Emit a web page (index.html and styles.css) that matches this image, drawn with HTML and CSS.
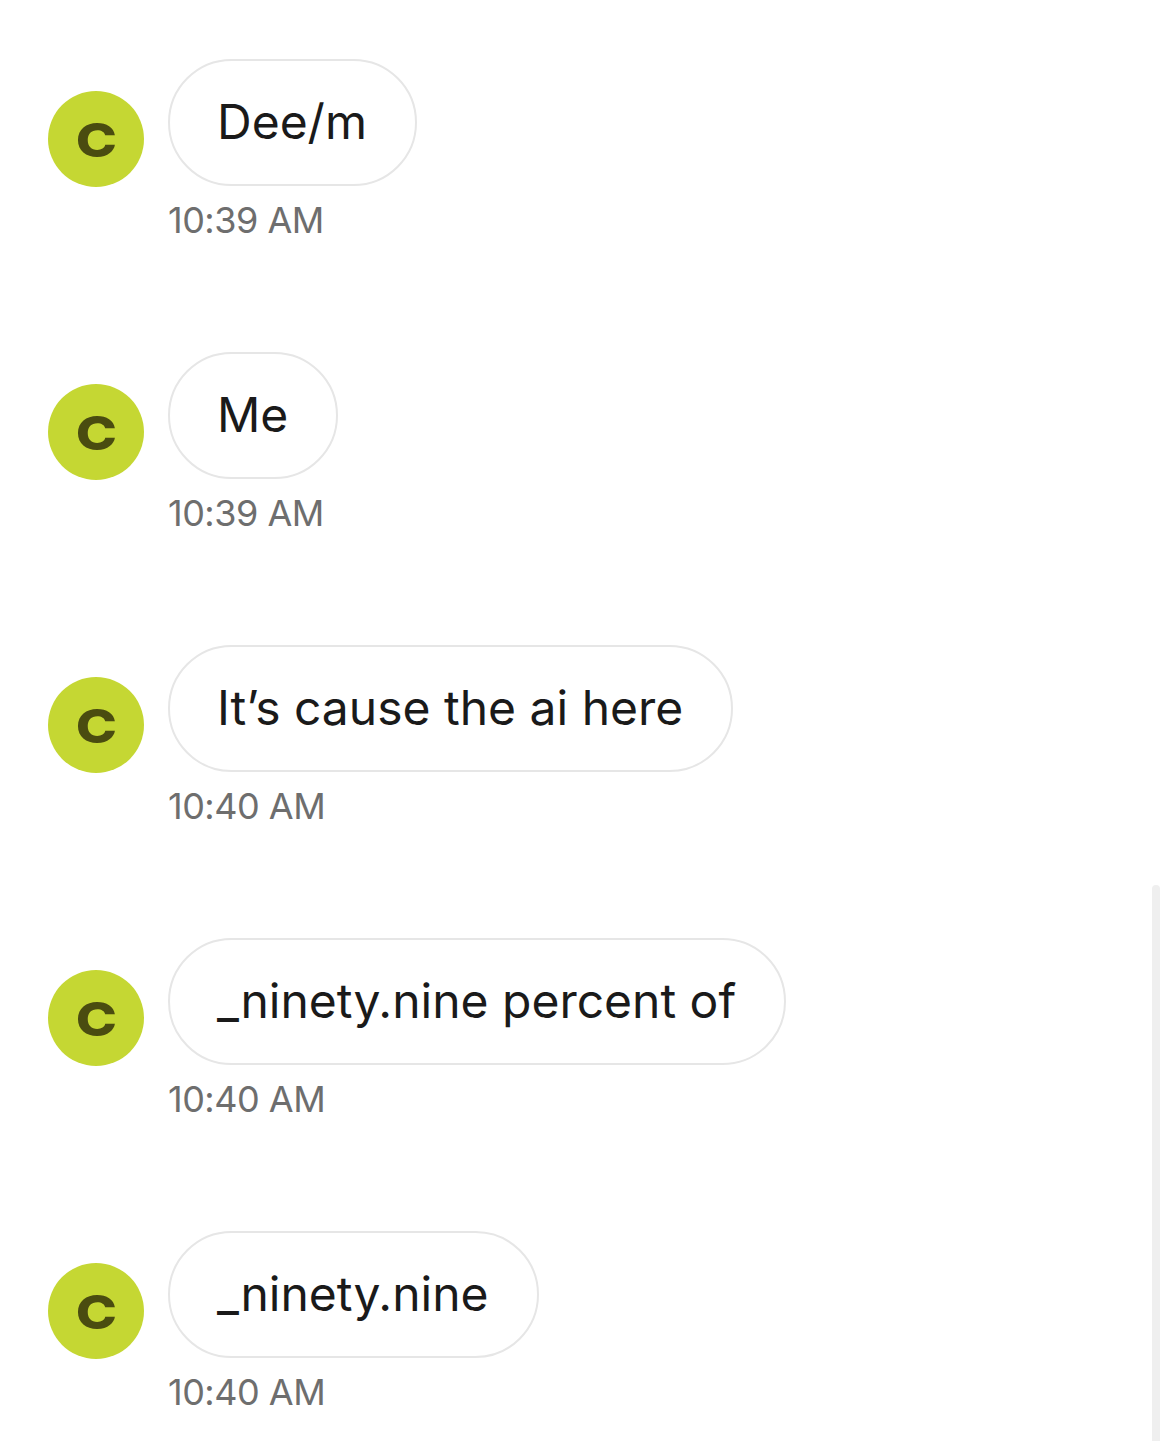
FILE: index.html
```html
<!DOCTYPE html>
<html lang="en">
<head>
<meta charset="utf-8">
<link rel="stylesheet" href="styles.css">
</head>
<body>
<div class="thread">
  <div class="msg">
    <div class="row">
      <div class="avatar"><span class="initial">C</span></div>
      <div class="bubble">Dee/m</div>
    </div>
    <div class="time">10:39 AM</div>
  </div>
  <div class="msg">
    <div class="row">
      <div class="avatar"><span class="initial">C</span></div>
      <div class="bubble">Me</div>
    </div>
    <div class="time">10:39 AM</div>
  </div>
  <div class="msg">
    <div class="row">
      <div class="avatar"><span class="initial">C</span></div>
      <div class="bubble">It’s cause the ai here</div>
    </div>
    <div class="time">10:40 AM</div>
  </div>
  <div class="msg">
    <div class="row">
      <div class="avatar"><span class="initial">C</span></div>
      <div class="bubble">_ninety.nine percent of</div>
    </div>
    <div class="time">10:40 AM</div>
  </div>
  <div class="msg">
    <div class="row">
      <div class="avatar"><span class="initial">C</span></div>
      <div class="bubble">_ninety.nine</div>
    </div>
    <div class="time">10:40 AM</div>
  </div>
</div>
<div class="scrollbar"></div>
</body>
</html>
```
FILE: styles.css
```css
html, body {
  margin: 0;
  padding: 0;
  background: #ffffff;
}
body {
  font-family: Inter, "Noto Sans", sans-serif;
  width: 1170px;
  height: 1441px;
  overflow: hidden;
  position: relative;
}
.thread {
  display: flex;
  flex-direction: column;
  gap: 110px;
  padding: 59px 0 0 48px;
}
.msg {
  display: flex;
  flex-direction: column;
}
.row {
  display: flex;
  align-items: flex-end;
  gap: 24px;
}
.avatar {
  width: 96px;
  height: 96px;
  border-radius: 50%;
  background: #c5d733;
  color: #4a4c10;
  font-weight: 800;
  font-size: 47px;
  display: flex;
  align-items: center;
  justify-content: center;
  flex-shrink: 0;
  margin-bottom: -1px;
}
.initial {
  display: inline-block;
  transform: scaleX(1.18);
  line-height: 1;
}
.bubble {
  border: 2px solid #e6e6e6;
  border-radius: 64px;
  padding: 32px 48px 33px 47px;
  font-size: 48px;
  line-height: 58px;
  color: #1a1a1a;
}
.time {
  margin: 12px 0 0 120px;
  font-size: 36px;
  line-height: 44px;
  color: #6e6e6e;
  letter-spacing: -0.5px;
}
.scrollbar {
  position: absolute;
  left: 1152px;
  top: 885px;
  width: 8px;
  height: 600px;
  background: #efefef;
  border-radius: 4px;
}
```
